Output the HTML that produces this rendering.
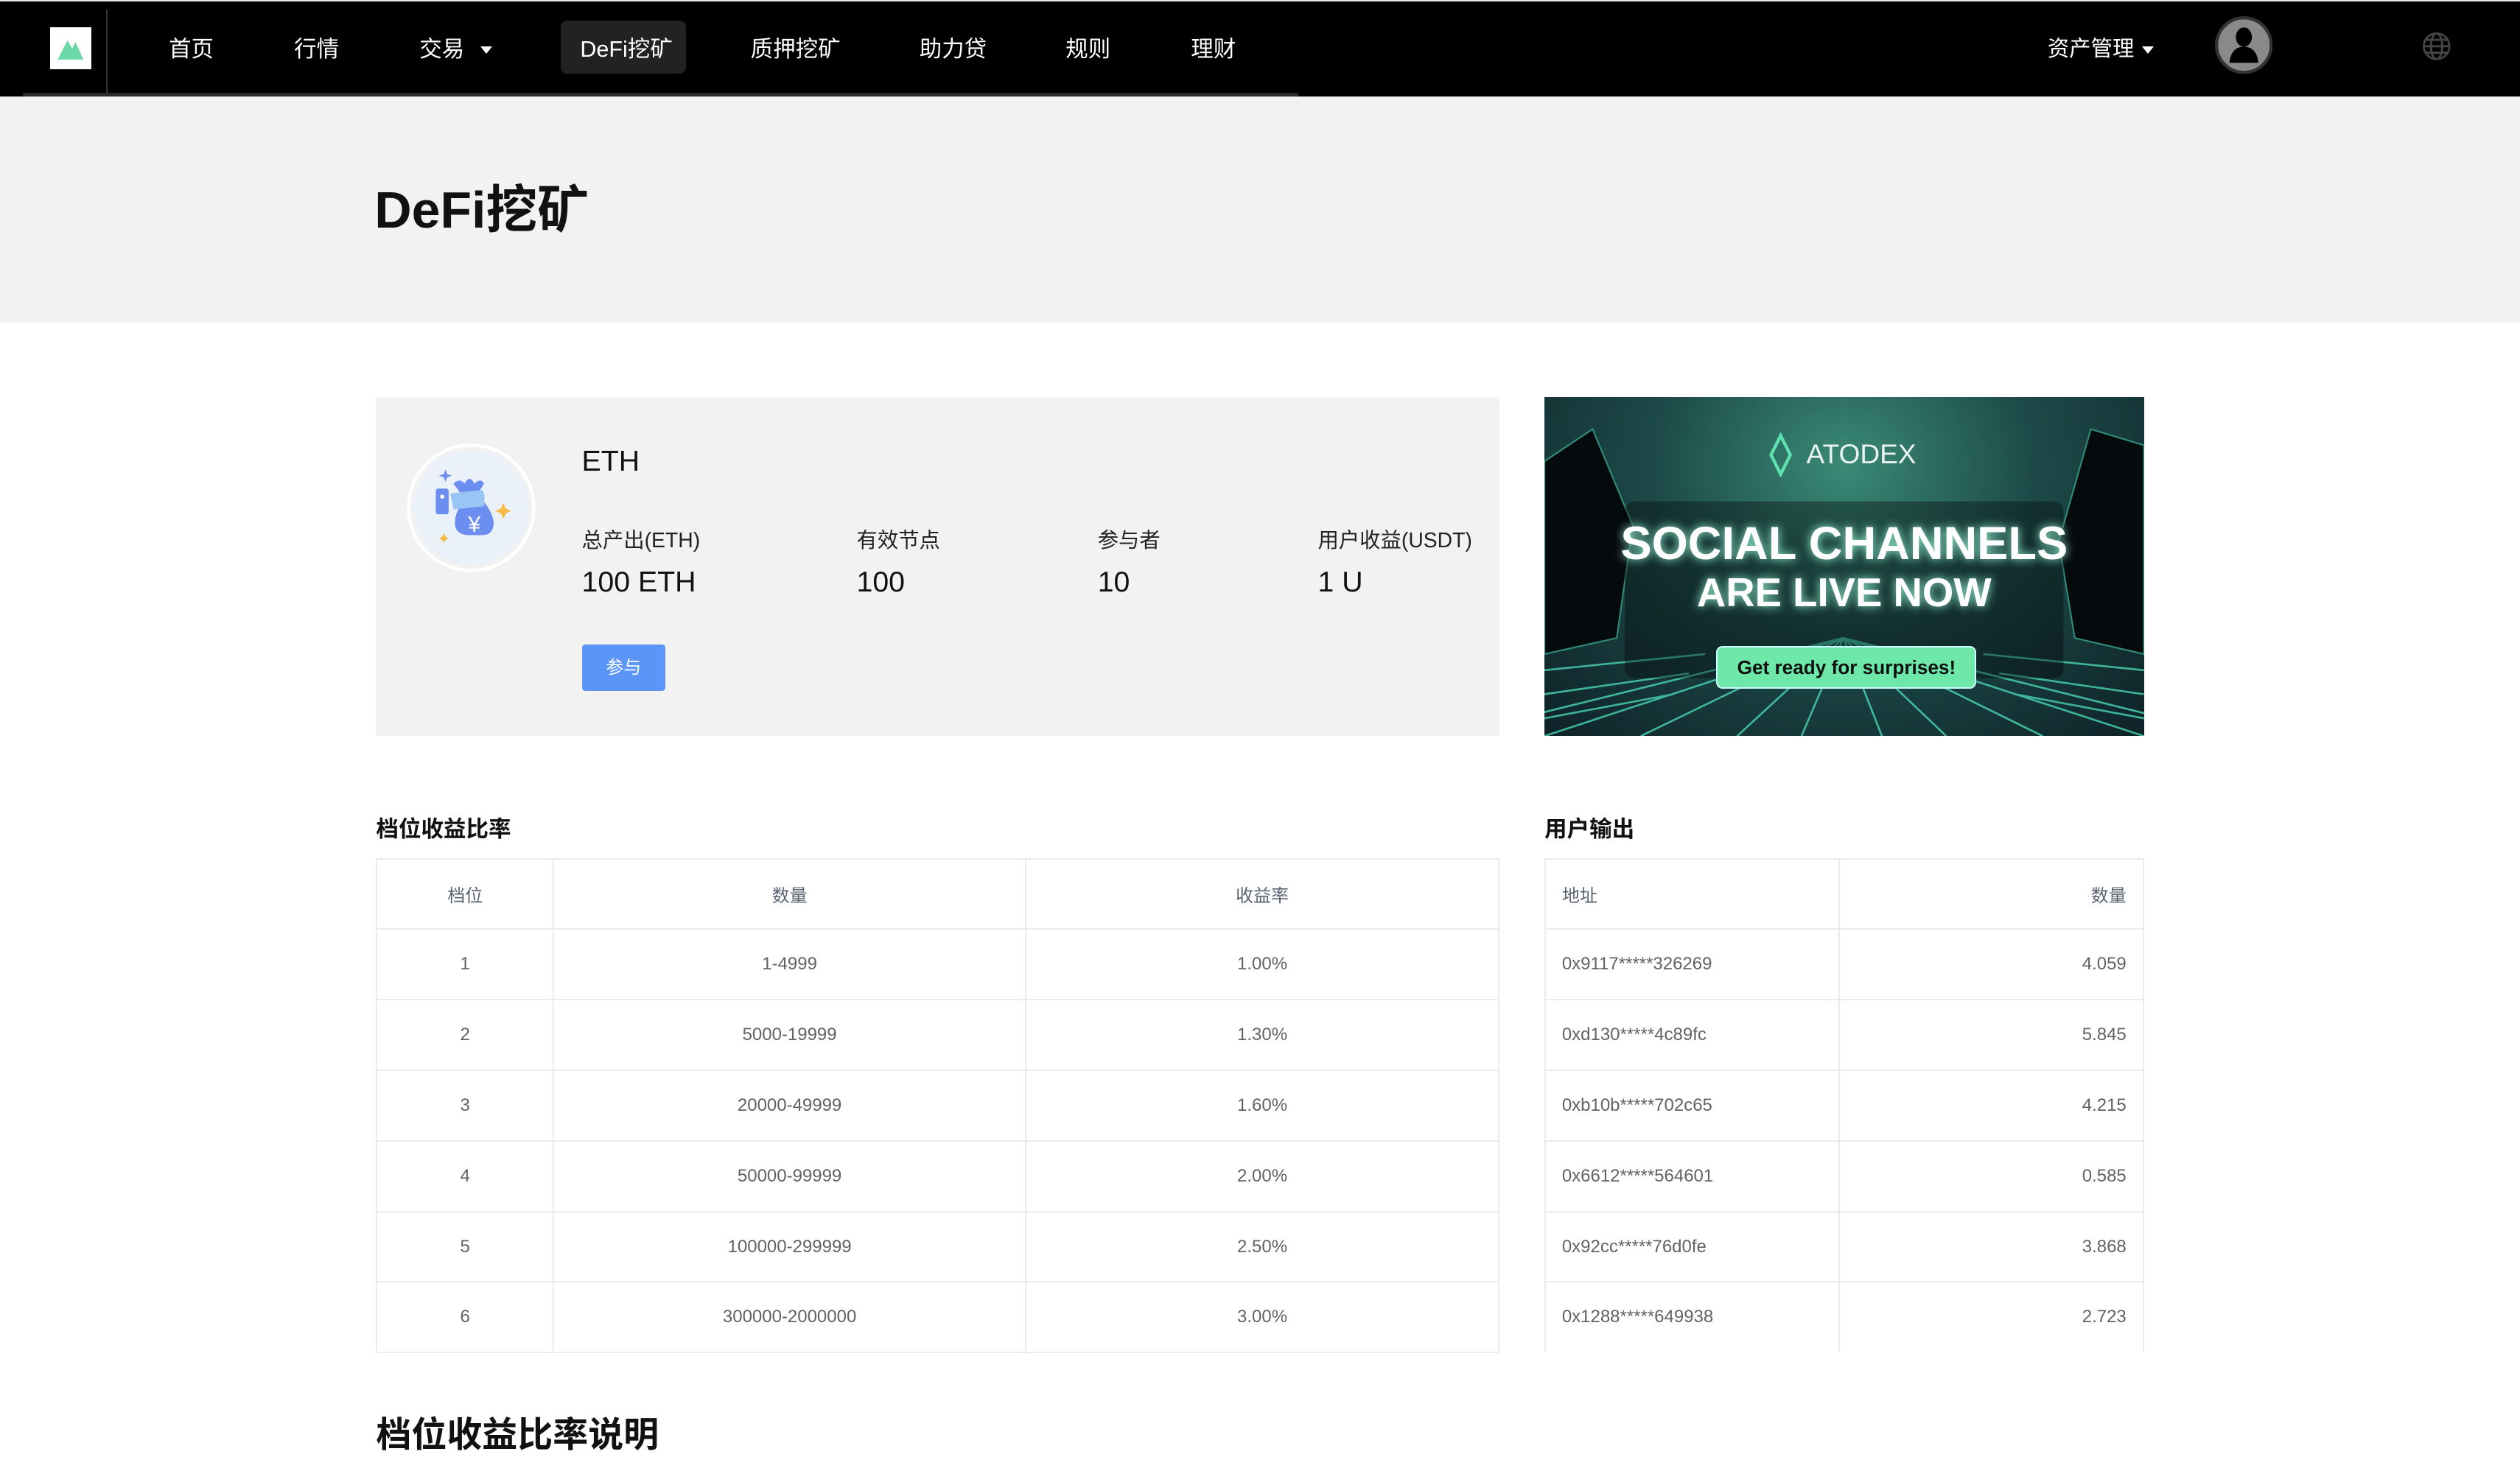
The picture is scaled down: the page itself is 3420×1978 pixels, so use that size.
<!DOCTYPE html>
<html><head><meta charset="utf-8">
<style>
html,body{margin:0;padding:0;background:#fff;}
body{width:1568px;height:900px;zoom:2.1811;overflow:hidden;position:relative;font-family:"Liberation Sans","Noto Sans CJK SC",sans-serif;}
.a{position:absolute;white-space:nowrap;}
.nav{position:absolute;left:0;top:1px;width:1568px;height:59px;background:#000;}
.ni{position:absolute;top:22px;color:#fff;font-size:14px;line-height:16px;}
.tri{position:absolute;width:0;height:0;border-left:4px solid transparent;border-right:4px solid transparent;border-top:5px solid #fff;}
table{position:absolute;border-collapse:collapse;font-size:11px;color:#606266;}
td{border:1px solid #e8ebf0;height:43px;padding:0 10px;}
th{border:1px solid #e8ebf0;height:43px;font-weight:normal;color:#5a6370;padding:0 10px;}
</style></head><body>
<div style="position:absolute;left:0;top:0;width:1568px;height:1px;background:#e8e8e8"></div>
<div class="nav">
  <div class="a" style="left:31px;top:16px;width:26px;height:26px;background:#fff"></div>
  <svg class="a" style="left:34px;top:20px" width="20" height="18" viewBox="0 0 20 18"><path d="M2 16 L8 4 L11 9 L13 5 L18 16 Z" fill="#6ed9a8"/></svg>
  <div class="a" style="left:66px;top:5px;width:1px;height:54px;background:#333"></div>
  <div class="a" style="left:14px;top:57px;width:794px;height:2px;background:#2a2a2a"></div>
  <div class="ni" style="left:105px">首页</div>
  <div class="ni" style="left:183px">行情</div>
  <div class="ni" style="left:261px">交易</div>
  <div class="tri" style="left:299px;top:28px"></div>
  <div class="a" style="left:349px;top:12px;width:78px;height:33px;background:#222;border-radius:4px"></div>
  <div class="ni" style="left:361px">DeFi挖矿</div>
  <div class="ni" style="left:467px">质押挖矿</div>
  <div class="ni" style="left:572px">助力贷</div>
  <div class="ni" style="left:663px">规则</div>
  <div class="ni" style="left:741px">理财</div>
  <div class="ni" style="left:1274px;font-size:13.5px">资产管理</div>
  <div class="tri" style="left:1333px;top:28px"></div>
  <svg class="a" style="left:1378px;top:9px" width="36" height="36" viewBox="0 0 36 36"><circle cx="18" cy="18" r="17" fill="#8a8a8a" stroke="#333" stroke-width="2"/><ellipse cx="18" cy="13" rx="5" ry="6" fill="#000"/><path d="M9 29 Q10 19 18 19 Q26 19 27 29 Z" fill="#000"/></svg>
  <svg class="a" style="left:1506px;top:18px" width="20" height="20" viewBox="0 0 20 20" fill="none" stroke="#444" stroke-width="1.3"><circle cx="10" cy="10" r="8"/><ellipse cx="10" cy="10" rx="3.5" ry="8"/><path d="M2 10H18M3.5 6H16.5M3.5 14H16.5"/></svg>
</div>
<div class="a" style="left:0;top:60px;width:1568px;height:141px;background:#f2f2f2"></div>
<div class="a" style="left:233px;top:112px;font-size:32px;font-weight:bold;color:#111;line-height:38px">DeFi挖矿</div>

<div class="a" style="left:234px;top:247px;width:699px;height:211px;background:#f2f2f2"></div>
<svg class="a" style="left:252px;top:275px" width="82" height="82" viewBox="0 0 82 82">
<circle cx="41" cy="41" r="40" fill="#fff"/><circle cx="41" cy="41" r="38" fill="#f2f2f2"/><circle cx="41" cy="41" r="36" fill="#ebf1f9"/>
<path d="M30 26 Q34 22 37 26 Q40 20 43 26 Q47 22 49 26 L44 34 L36 34 Z" fill="#6b8ef0"/>
<path d="M40 34 Q30 42 31 52 Q32 58 40 58 L48 58 Q55 58 55 50 Q54 42 46 34 Z" fill="#6b8ef0"/>
<path d="M28 32 L48 30 Q50 32 49 40 L30 42 Z" fill="#9ac6f5"/>
<rect x="19" y="29" width="8" height="16" rx="1.5" fill="#6b8ef0"/><circle cx="23" cy="34" r="1.3" fill="#fff"/>
<text x="43" y="56" font-size="14" fill="#fff" text-anchor="middle" font-family="Liberation Sans">¥</text>
<path d="M61 38 L62.5 41.5 L66 43 L62.5 44.5 L61 48 L59.5 44.5 L56 43 L59.5 41.5 Z" fill="#f5b944"/>
<path d="M25 17 L26 20 L29 21 L26 22 L25 25 L24 22 L21 21 L24 20 Z" fill="#6b8ef0"/>
<path d="M24 57 L25 59 L27 60 L25 61 L24 63 L23 61 L21 60 L23 59 Z" fill="#f5b944"/>
</svg>
<div class="a" style="left:362px;top:277px;font-size:18px;color:#111">ETH</div>
<div class="a" style="left:362px;top:326px;font-size:13px;color:#222">总产出(ETH)</div>
<div class="a" style="left:533px;top:326px;font-size:13px;color:#222">有效节点</div>
<div class="a" style="left:683px;top:326px;font-size:13px;color:#222">参与者</div>
<div class="a" style="left:820px;top:326px;font-size:13px;color:#222">用户收益(USDT)</div>
<div class="a" style="left:362px;top:352px;font-size:18px;color:#111">100 ETH</div>
<div class="a" style="left:533px;top:352px;font-size:18px;color:#111">100</div>
<div class="a" style="left:683px;top:352px;font-size:18px;color:#111">10</div>
<div class="a" style="left:820px;top:352px;font-size:18px;color:#111">1 U</div>
<div class="a" style="left:362px;top:401px;width:52px;height:29px;background:#5b95f7;border-radius:2px;color:#fff;font-size:11px;line-height:29px;text-align:center">参与</div>

<div class="a" style="left:961px;top:247px;width:373px;height:211px;overflow:hidden;background:radial-gradient(ellipse at 50% 20%,#3a8a76 0%,#1d4a48 45%,#0e2228 100%)">
  <svg class="a" style="left:0;top:0" width="373" height="211" viewBox="0 0 373 211">
    <g stroke="#49d6b4" stroke-width="1.2" opacity="0.8">
      <path d="M186 150 L-60 211M186 150 L0 211M186 150 L60 211M186 150 L120 211M186 150 L160 211M186 150 L210 211M186 150 L250 211M186 150 L310 211M186 150 L373 211M186 150 L430 211"/>
      <path d="M0 170 L100 160M0 185 L90 172M0 200 L80 185M373 170 L273 160M373 185 L283 172M373 200 L293 185"/>
    </g>
    <path d="M0 40 L30 20 L55 80 L45 150 L0 160 Z" fill="#050a0c" stroke="#2f8a78"/>
    <path d="M373 30 L340 20 L320 90 L330 150 L373 160 Z" fill="#050a0c" stroke="#2f8a78"/>
    <rect x="50" y="65" width="273" height="110" rx="6" fill="#000" opacity="0.35"/>
    <path d="M147 24 L141 36 L147 48 L153 36 Z" fill="none" stroke="#5fe0b0" stroke-width="2"/>
  </svg>
  <div class="a" style="left:163px;top:26px;color:#e8f2f0;font-size:17px">ATODEX</div>
  <div class="a" style="left:0;width:373px;top:76px;text-align:center;color:#fff;font-weight:bold;font-size:29px;line-height:32px;text-shadow:0 0 6px #9fffe0">SOCIAL CHANNELS</div>
  <div class="a" style="left:0;width:373px;top:108px;text-align:center;color:#fff;font-weight:bold;font-size:25px;line-height:28px;text-shadow:0 0 6px #9fffe0">ARE LIVE NOW</div>
  <div class="a" style="left:107px;top:155px;width:160px;height:25px;background:#6ee8a8;border-radius:4px;border:1px solid #cff;color:#111;font-weight:bold;font-size:12px;line-height:25px;text-align:center">Get ready for surprises!</div>
</div>

<div class="a" style="left:234px;top:505px;font-size:14px;font-weight:bold;color:#111">档位收益比率</div>
<div class="a" style="left:961px;top:505px;font-size:14px;font-weight:bold;color:#111">用户输出</div>

<table style="left:234px;top:534px;width:699px;text-align:center">
<tr><th style="width:89px">档位</th><th style="width:273px">数量</th><th>收益率</th></tr>
<tr><td>1</td><td>1-4999</td><td>1.00%</td></tr>
<tr><td>2</td><td>5000-19999</td><td>1.30%</td></tr>
<tr><td>3</td><td>20000-49999</td><td>1.60%</td></tr>
<tr><td>4</td><td>50000-99999</td><td>2.00%</td></tr>
<tr><td>5</td><td>100000-299999</td><td>2.50%</td></tr>
<tr><td>6</td><td>300000-2000000</td><td>3.00%</td></tr>
</table>
<table style="left:961px;top:534px;width:373px">
<tr><th style="width:162px;text-align:left">地址</th><th style="text-align:right">数量</th></tr>
<tr><td>0x9117*****326269</td><td style="text-align:right">4.059</td></tr>
<tr><td>0xd130*****4c89fc</td><td style="text-align:right">5.845</td></tr>
<tr><td>0xb10b*****702c65</td><td style="text-align:right">4.215</td></tr>
<tr><td>0x6612*****564601</td><td style="text-align:right">0.585</td></tr>
<tr><td>0x92cc*****76d0fe</td><td style="text-align:right">3.868</td></tr>
<tr><td style="border-bottom:none">0x1288*****649938</td><td style="text-align:right;border-bottom:none">2.723</td></tr>
</table>

<div class="a" style="left:234px;top:875px;font-size:22px;font-weight:bold;color:#111">档位收益比率说明</div>
</body></html>
